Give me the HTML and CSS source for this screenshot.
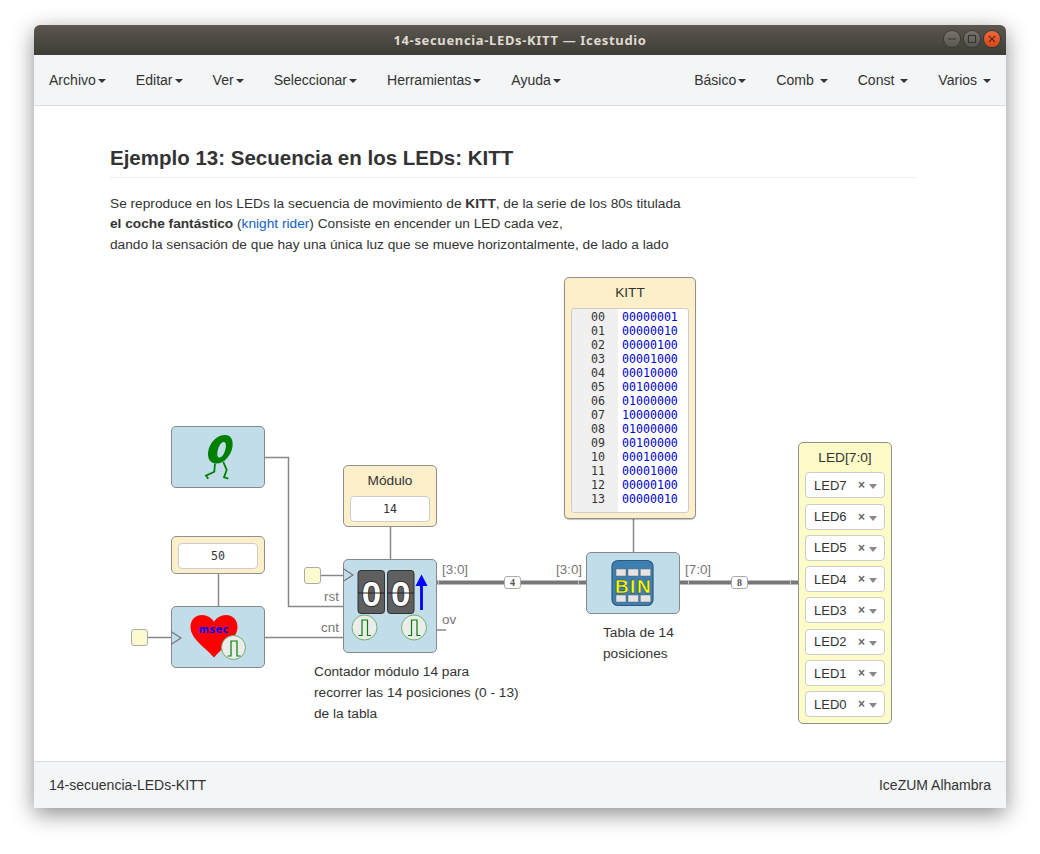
FILE: index.html
```html
<!DOCTYPE html>
<html lang="es">
<head>
  <meta charset="utf-8">
  <title>14-secuencia-LEDs-KITT — Icestudio</title>
  <link rel="stylesheet" href="styles.css">
</head>
<body>
<div class="window">

  <header class="titlebar">
    <span class="title">14-secuencia-LEDs-KITT — Icestudio</span>
    <div class="winbtns">
      <span class="winbtn"><svg width="18" height="18" viewBox="0 0 18 18"><path d="M4.5 9h9" stroke="#333" stroke-width="1.2"/></svg></span>
      <span class="winbtn"><svg width="18" height="18" viewBox="0 0 18 18"><rect x="5" y="5" width="8" height="8" fill="none" stroke="#333" stroke-width="1.2"/></svg></span>
      <span class="winbtn winbtn-close"><svg width="18" height="18" viewBox="0 0 18 18"><path d="M5.5 5.5l7 7M12.5 5.5l-7 7" stroke="#5a2412" stroke-width="1.3"/></svg></span>
    </div>
  </header>

  <nav class="menubar">
    <ul class="menu">
      <li>Archivo<i class="caret"></i></li>
      <li>Editar<i class="caret"></i></li>
      <li>Ver<i class="caret"></i></li>
      <li>Seleccionar<i class="caret"></i></li>
      <li>Herramientas<i class="caret"></i></li>
      <li>Ayuda<i class="caret"></i></li>
    </ul>
    <ul class="menu">
      <li>Básico<i class="caret"></i></li>
      <li>Comb <i class="caret"></i></li>
      <li>Const <i class="caret"></i></li>
      <li>Varios <i class="caret"></i></li>
    </ul>
  </nav>

  <main class="content">
    <h2 class="heading">Ejemplo 13: Secuencia en los LEDs: KITT</h2>
    <p class="intro">Se reproduce en los LEDs la secuencia de movimiento de <b>KITT</b>, de la serie de los 80s titulada<br>
      <b>el coche fantástico</b> (<a href="#">knight rider</a>) Consiste en encender un LED cada vez,<br>
      dando la sensación de que hay una única luz que se mueve horizontalmente, de lado a lado</p>

    <div class="canvas">
      <svg class="wires" width="800" height="470" viewBox="0 0 800 470">
        <path class="wire" d="M155 187.5h23.5v149h54.5"/>
        <path class="wire" d="M155 367.5h78"/>
        <path class="wire" d="M108.5 304v32"/>
        <path class="wire" d="M38 367.5h23"/>
        <path class="wire" d="M210 305.5h23"/>
        <path class="wire" d="M280.5 257v32"/>
        <path class="wire" d="M327 360h9"/>
        <path class="wire" d="M523.5 249v33"/>
        <path class="bus" d="M327 312.5h149"/>
        <path class="bus" d="M570 312.5h118"/>
        <path class="tick" d="M328.5 310.5v4M468.5 310.5v4M578.5 310.5v4M680.5 310.5v4"/>
      </svg>

      <div class="port port-a"></div>
      <div class="port port-b"></div>

      <!-- pulse block -->
      <div class="block block-snail">
        <svg width="94" height="62" viewBox="0 0 94 62">
          <path fill-rule="evenodd" fill="#008000" d="M54 9c5.800 0 8.500 4.800 7.500 11.500-1.500 9.500-8.500 17-16 17-6.300 0-9.300-4.800-8.300-12C38.500 16.500 46 9 54 9zM52.800 16c-3 0-5.300 4.500-6.300 9.500-.7 4 .1 6 1.900 6 3 0 5.300-4.500 6.300-9.500.7-4-.1-6-1.900-6z"/>
          <path d="M44 37.500l-.7 8.200-8.300 4 2.300 3M52.300 36l3.400 8-2.700 7.300 4.300 1.400" fill="none" stroke="#008000" stroke-width="1.800"/>
        </svg>
      </div>

      <div class="const const-50"><div class="field mono">50</div></div>

      <!-- heart block -->
      <div class="block block-heart">
        <svg class="clk" width="12" height="16" viewBox="0 0 12 16"><path d="M0 1.500l10 6.500-10 6.500" fill="none" stroke="#777" stroke-width="1.200"/></svg>
        <svg width="94" height="62" viewBox="0 0 94 62">
          <path d="M43 51.500C36 43 19.500 33 19.500 21 19.500 13 25 9 31 9c5 0 10 3 12 7 2-4 7-7 12-7 6 0 11.500 4 11.500 12C66.500 33 50 43 43 51.500z" fill="#ff0000"/>
          <text class="msec" x="42.700" y="27">msec</text>
          <circle cx="62.500" cy="41.500" r="12" fill="#ececec" stroke="#6cb26c"/>
          <path d="M56.500 50h3.500V35h6v15h3.500" fill="none" stroke="#008000" stroke-width="1.200"/>
        </svg>
      </div>

      <div class="const const-mod">
        <div class="const-name">Módulo</div>
        <div class="field mono">14</div>
      </div>

      <!-- counter block -->
      <div class="block block-counter">
        <svg class="clk" width="12" height="16" viewBox="0 0 12 16"><path d="M0 1.500l10 6.500-10 6.500" fill="none" stroke="#777" stroke-width="1.200"/></svg>
        <svg width="94" height="94" viewBox="0 0 94 94">
          <rect x="15" y="11.500" width="26.500" height="43" rx="3" fill="#5f5f5f" stroke="#333"/>
          <rect x="44.500" y="11.500" width="26.500" height="43" rx="3" fill="#5f5f5f" stroke="#333"/>
          <text class="flip" x="28.500" y="46.500">0</text>
          <text class="flip" x="57.800" y="46.500">0</text>
          <path d="M15 34h26.500M44.500 34H71" stroke="#222" stroke-width="1.200"/>
          <path d="M78.500 51V27" stroke="#0000ff" stroke-width="2.800"/>
          <path d="M72.500 27l6-11.500 6 11.500z" fill="#0000ff"/>
          <circle cx="21.500" cy="68.500" r="12.500" fill="#ececec" stroke="#6cb26c"/>
          <path d="M15.500 76.500h3.500V61h5.500v15.500H28" fill="none" stroke="#008000" stroke-width="1.200"/>
          <circle cx="71" cy="68.500" r="12.500" fill="#ececec" stroke="#6cb26c"/>
          <path d="M65 76.500h3.500V61H74v15.500h3.500" fill="none" stroke="#008000" stroke-width="1.200"/>
        </svg>
      </div>

      <!-- memory block -->
      <div class="const const-kitt">
        <div class="const-name">KITT</div>
        <div class="code mono">
          <div class="gutter">00<br>01<br>02<br>03<br>04<br>05<br>06<br>07<br>08<br>09<br>10<br>11<br>12<br>13</div>
          <div class="lines">00000001<br>00000010<br>00000100<br>00001000<br>00010000<br>00100000<br>01000000<br>10000000<br>01000000<br>00100000<br>00010000<br>00001000<br>00000100<br>00000010</div>
        </div>
      </div>

      <div class="block block-table">
        <svg width="94" height="62" viewBox="0 0 94 62">
          <rect x="26" y="8.500" width="41" height="45" rx="6" fill="#3d7fb0" stroke="#2c5a7c" stroke-width="1.200"/>
          <path d="M30 17h10v7H30zM42 17h10.500v7H42zM54.300 17h10.400v7H54.300zM30 43h10v7H30zM42 43h10.500v7H42zM54.300 43h10.400v7H54.300z" fill="#e4e4e4" stroke="#666" stroke-width=".5"/>
          <text class="bin" x="47.500" y="40.700">BIN</text>
        </svg>
      </div>

      <div class="const-led">
        <div class="const-name">LED[7:0]</div>
        <div class="pin"><span>LED7</span><b>×</b><i></i></div>
        <div class="pin"><span>LED6</span><b>×</b><i></i></div>
        <div class="pin"><span>LED5</span><b>×</b><i></i></div>
        <div class="pin"><span>LED4</span><b>×</b><i></i></div>
        <div class="pin"><span>LED3</span><b>×</b><i></i></div>
        <div class="pin"><span>LED2</span><b>×</b><i></i></div>
        <div class="pin"><span>LED1</span><b>×</b><i></i></div>
        <div class="pin"><span>LED0</span><b>×</b><i></i></div>
      </div>

      <span class="lbl lbl-rst">rst</span>
      <span class="lbl lbl-cnt">cnt</span>
      <span class="lbl lbl-ov">ov</span>
      <span class="lbl lbl-out">[3:0]</span>
      <span class="lbl lbl-in">[3:0]</span>
      <span class="lbl lbl-led">[7:0]</span>
      <span class="size size-4">4</span>
      <span class="size size-8">8</span>

      <p class="note note-counter">Contador módulo 14 para<br>recorrer las 14 posiciones (0 - 13)<br>de la tabla</p>
      <p class="note note-table">Tabla de 14<br>posiciones</p>
    </div>
  </main>

  <footer class="statusbar">
    <span>14-secuencia-LEDs-KITT</span>
    <span>IceZUM Alhambra</span>
  </footer>
</div>
</body>
</html>
```

FILE: styles.css
```css
html, body {
  margin: 0;
  height: 100%;
  background: #fff;
}

body {
  padding: 25px 34px 0;
  box-sizing: border-box;
  height: 854px;
  overflow: hidden;
  color: #333;
  font-family: "Liberation Sans", Arial, sans-serif;
  font-size: 14px;
}

.window {
  width: 972px;
  height: 783px;
  display: flex;
  flex-direction: column;
  background: #fff;
  border-radius: 6px 6px 0 0;
  box-shadow: 0 6px 22px rgba(0, 0, 0, .45);
}

/* title bar */
.titlebar {
  height: 30px;
  flex: none;
  display: flex;
  align-items: center;
  justify-content: center;
  position: relative;
  border-radius: 6px 6px 0 0;
  background: linear-gradient(#5b574f, #3e3c36);
}

.title {
  color: #dfdbd2;
  font-family: "Noto Sans", sans-serif;
  font-weight: 700;
  font-size: 13px;
  letter-spacing: .65px;
}

.winbtns {
  position: absolute;
  right: 6px;
  top: 6px;
  display: flex;
  gap: 4px;
}

.winbtn {
  width: 16px;
  height: 16px;
  border-radius: 50%;
  display: flex;
  align-items: center;
  justify-content: center;
  background: linear-gradient(#77736b, #5a5750);
  box-shadow: 0 0 0 1px #3a3832;
}

.winbtn-close {
  background: linear-gradient(#f0683a, #d9491a);
}

/* menu */
.menubar {
  height: 51px;
  flex: none;
  box-sizing: border-box;
  display: flex;
  justify-content: space-between;
  background: #f4f5f7;
  border-bottom: 1px solid #d9dbdf;
}

.menu {
  list-style: none;
  margin: 0;
  padding: 0;
  display: flex;
}

.menu li {
  padding: 0 15px;
  font-size: 14.050px;
  line-height: 50px;
  white-space: pre;
}

.caret {
  display: inline-block;
  margin-left: 2px;
  vertical-align: middle;
  border-top: 4px solid #333;
  border-left: 4px solid transparent;
  border-right: 4px solid transparent;
}

/* content */
.content {
  flex: 1;
  padding: 0 76px;
  min-height: 0;
}

.heading {
  margin: 38px 0 0;
  padding-bottom: 5px;
  border-bottom: 1px solid #eee;
  width: 806px;
  font-size: 20.500px;
  line-height: 28px;
  color: #333;
}

.intro {
  margin: 15.600px 0 0;
  font-size: 13.700px;
  line-height: 20.800px;
  color: #333;
}

.intro a {
  color: #0f62c5;
  text-decoration: none;
}

.canvas {
  position: relative;
  width: 800px;
  height: 470px;
  margin-top: 14px;
}

.wires {
  position: absolute;
  left: 0;
  top: 0;
}

.wire {
  fill: none;
  stroke: #888;
  stroke-width: 1.500;
}

.bus {
  fill: none;
  stroke: #777;
  stroke-width: 4;
}

.tick {
  stroke: #c4c4c4;
  stroke-width: 1;
}

.port {
  position: absolute;
  width: 17px;
  height: 17px;
  background: #fcfbcf;
  border: 1px solid #aaa;
  border-radius: 3px;
  box-sizing: border-box;
}

.port-a { left: 21px; top: 359px; }
.port-b { left: 194px; top: 297px; }

.block {
  position: absolute;
  width: 94px;
  box-sizing: border-box;
  background: #c0dde9;
  border: 1px solid #888;
  border-radius: 5px;
}

.block > svg {
  position: absolute;
  left: -1px;
  top: -1px;
}

.block > svg.clk {
  left: -1px;
  top: 23px;
}

.block-snail { left: 61px; top: 156px; height: 62px; }
.block-heart { left: 61px; top: 336px; height: 62px; }
.block-heart > svg.clk { top: 23px; }
.block-counter { left: 233px; top: 289px; height: 94px; }
.block-counter > svg.clk { top: 7px; }
.block-table { left: 476px; top: 282px; height: 62px; }

.const, .const-led {
  position: absolute;
  box-sizing: border-box;
  border: 1px solid #909090;
  border-radius: 5px;
  background: #fcefc9;
}

.const-name {
  text-align: center;
  font-size: 13.700px;
  line-height: 16px;
}

.field {
  box-sizing: border-box;
  height: 26px;
  line-height: 24px;
  margin: 0 6px;
  text-align: center;
  background: #fff;
  border: 1px solid #ccc;
  border-radius: 4px;
}

.mono {
  font-family: "DejaVu Sans Mono", monospace;
  font-size: 11.600px;
}

.const-50 { left: 61px; top: 266px; width: 94px; height: 38px; padding-top: 6px; }
.const-mod { left: 233px; top: 195px; width: 94px; height: 62px; padding-top: 7px; }
.const-mod .field { margin-top: 7px; }

.const-kitt {
  left: 454px;
  top: 7px;
  width: 132px;
  height: 242px;
  padding-top: 7px;
  box-shadow: 0 1px 1px rgba(0, 0, 0, .25);
}

.code {
  display: flex;
  box-sizing: border-box;
  height: 205px;
  margin: 7px 6px 0;
  background: #fff;
  border: 1px solid #ccc;
  border-radius: 3px;
  line-height: 14px;
  overflow: hidden;
}

.gutter {
  width: 46px;
  padding: 1px 13px 0 0;
  box-sizing: border-box;
  text-align: right;
  background: #f0f0f0;
  color: #333;
}

.lines {
  padding: 1px 0 0 4px;
  color: #0000cd;
}

.const-led {
  left: 688px;
  top: 172px;
  width: 94px;
  height: 282px;
  padding: 7px 6px 0;
  background: #fdfcc8;
  display: flex;
  flex-direction: column;
  gap: 5.300px;
}

.const-led .const-name {
  margin-bottom: 1px;
}

.pin {
  box-sizing: border-box;
  height: 26px;
  flex: none;
  display: flex;
  align-items: center;
  background: #fff;
  border: 1px solid #ccc;
  border-radius: 4px;
  padding-left: 8px;
  font-size: 13px;
}

.pin span {
  width: 44px;
}

.pin b {
  color: #666;
  font-size: 12px;
  width: 11px;
}

.pin i {
  margin-top: 3px;
  border-top: 5px solid #888;
  border-left: 4px solid transparent;
  border-right: 4px solid transparent;
}

.lbl {
  position: absolute;
  color: #777;
  font-size: 13.400px;
  line-height: 15px;
}

.lbl-rst { left: 214px; top: 319px; }
.lbl-cnt { left: 211px; top: 350px; }
.lbl-ov { left: 332px; top: 342px; }
.lbl-out { left: 332px; top: 292px; }
.lbl-in { left: 446px; top: 292px; }
.lbl-led { left: 575px; top: 292px; }

.size {
  position: absolute;
  box-sizing: border-box;
  top: 306px;
  width: 17px;
  height: 13px;
  background: #fff;
  border: 1px solid #aaa;
  border-radius: 3px;
  text-align: center;
  color: #555;
  font-family: "Liberation Serif", serif;
  font-weight: 700;
  font-size: 10px;
  line-height: 11px;
}

.size-4 { left: 394px; }
.size-8 { left: 621px; }

.note {
  position: absolute;
  margin: 0;
  font-size: 13.700px;
  line-height: 20.600px;
}

.note-counter { left: 204px; top: 392.500px; }
.note-table { left: 493px; top: 353px; }

.msec {
  fill: #0000ff;
  font-family: "DejaVu Sans", sans-serif;
  font-weight: 700;
  font-size: 10px;
  text-anchor: middle;
  letter-spacing: .3px;
}

.flip {
  fill: #fff;
  stroke: #222;
  stroke-width: 1.600;
  paint-order: stroke;
  font-family: "Liberation Sans", sans-serif;
  font-weight: 700;
  font-size: 35px;
  text-anchor: middle;
}

.bin {
  fill: #ffff00;
  stroke: #333;
  stroke-width: .4;
  font-family: "Liberation Sans", sans-serif;
  font-weight: 700;
  font-size: 19px;
  letter-spacing: 1.500px;
  text-anchor: middle;
}

/* status bar */
.statusbar {
  height: 47px;
  flex: none;
  box-sizing: border-box;
  display: flex;
  justify-content: space-between;
  align-items: center;
  padding: 0 15px;
  background: #f4f5f7;
  border-top: 1px solid #d9dbdf;
}
```
